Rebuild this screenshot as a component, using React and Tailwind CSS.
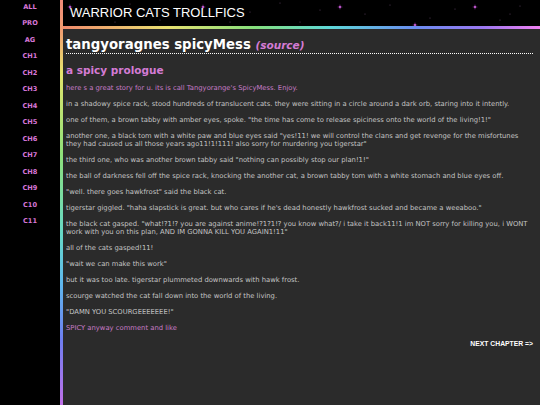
import React from "react";

const chapters = ["ALL", "PRO", "AG", "CH1", "CH2", "CH3", "CH4", "CH5", "CH6", "CH7", "CH8", "CH9", "C10", "C11"];

const story = [
  "in a shadowy spice rack, stood hundreds of translucent cats. they were sitting in a circle around a dark orb, staring into it intently.",
  "one of them, a brown tabby with amber eyes, spoke. \"the time has come to release spiciness onto the world of the living!1!\"",
  "another one, a black tom with a white paw and blue eyes said \"yes!11! we will control the clans and get revenge for the misfortunes they had caused us all those years ago11!1!111! also sorry for murdering you tigerstar\"",
  "the third one, who was another brown tabby said \"nothing can possibly stop our plan!1!\"",
  "the ball of darkness fell off the spice rack, knocking the another cat, a brown tabby tom with a white stomach and blue eyes off.",
  "\"well. there goes hawkfrost\" said the black cat.",
  "tigerstar giggled. \"haha slapstick is great. but who cares if he's dead honestly hawkfrost sucked and became a weeaboo.\"",
  "the black cat gasped. \"what!?1!? you are against anime!?1?1!? you know what?/ i take it back11!1 im NOT sorry for killing you, i WONT work with you on this plan, AND IM GONNA KILL YOU AGAIN1!11\"",
  "all of the cats gasped!11!",
  "\"wait we can make this work\"",
  "but it was too late. tigerstar plummeted downwards with hawk frost.",
  "scourge watched the cat fall down into the world of the living.",
  "\"DAMN YOU SCOURGEEEEEEE!\"",
];

const stars = [
  [70, 7, 1], [203, 7, 1], [340, 7, 1], [475, 7, 1], [415, 25, 0.7],
  [95, 15, 0], [130, 4, 0], [160, 20, 0], [250, 12, 0], [280, 3, 0], [300, 22, 0],
  [365, 14, 0], [390, 5, 0], [430, 18, 0], [455, 9, 0], [500, 20, 0], [520, 6, 0],
  [180, 14, 0], [230, 22, 0], [320, 10, 0], [510, 14, 0], [115, 22, 0],
];

function Stars() {
  return (
    <svg className="absolute inset-0 h-full w-full" viewBox="0 0 477 26" preserveAspectRatio="none">
      {stars.map(([x, y, big], i) =>
        big ? (
          <g key={i} transform={`translate(${x - 63} ${y})`} fill="#b040c0" opacity="0.9">
            <path d="M0 -3 L0.6 -0.6 L3 0 L0.6 0.6 L0 3 L-0.6 0.6 L-3 0 L-0.6 -0.6 Z" />
            <circle r="1" fill="#e070f0" />
          </g>
        ) : (
          <circle key={i} cx={x - 63} cy={y} r="0.5" fill="#6a4a70" />
        )
      )}
    </svg>
  );
}

export default function App() {
  return (
    <div className="flex h-[405px] w-[540px] overflow-hidden bg-black font-['DejaVu_Sans',Verdana,sans-serif]">
      {/* chapter nav */}
      <nav className="flex w-[60px] shrink-0 flex-col items-center gap-[8.5px] pt-[2.5px]">
        {chapters.map((c) => (
          <a key={c} className="text-[6.6px] font-bold leading-[8px] text-[#d877d8]">
            {c}
          </a>
        ))}
      </nav>

      <div className="w-[3px] shrink-0 bg-[linear-gradient(to_bottom,#f08a78,#f0a070_8%,#e4e46c_18%,#8ee07a_38%,#66d8c8_58%,#5fb8ee_70%,#6f7ef0_84%,#c070e8_100%)]" />

      <div className="flex min-w-0 flex-1 flex-col">
        <header className="relative h-[26px] shrink-0 bg-black">
          <Stars />
          <h1 className="relative pl-[7px] pt-[5px] font-['Liberation_Sans',Arial,sans-serif] text-[13px] leading-[16px] text-white">
            WARRIOR CATS TROLLFICS
          </h1>
        </header>
        <div className="h-[3px] shrink-0 bg-[linear-gradient(to_right,#f08a6c,#e8e070_22%,#86e07c_40%,#5ed8d8_56%,#6a8cf0_74%,#9a78f0_88%,#f080f0_100%)]" />

        <main className="flex-1 bg-[#2b2b2b] pl-[3px] pr-[7px] pt-[8px]">
          <h2 className="border-b border-dotted border-white text-[13.3px] font-bold leading-[16px] text-white">
            tangyoragnes spicyMess{" "}
            <span className="text-[10.5px] italic text-[#d47bd4]">(source)</span>
          </h2>
          <h3 className="mt-[10px] text-[10.5px] font-bold leading-[12px] text-[#d47bd4]">a spicy prologue</h3>

          <div className="mt-[8px] flex flex-col gap-[8px] text-[6.8px] leading-[8px] text-[#c4c4c4]">
            <p className="text-[#c77bc7]">here s a great story for u. its is call Tangyorange's SpicyMess. Enjoy.</p>
            {story.map((t, i) => (
              <p key={i}>{t}</p>
            ))}
            <p className="text-[#c77bc7]">SPICY anyway comment and like</p>
            <p className="text-right font-['Liberation_Sans',Arial,sans-serif] text-[6.8px] font-bold text-white">
              NEXT CHAPTER =&gt;
            </p>
          </div>
        </main>
      </div>
    </div>
  );
}
